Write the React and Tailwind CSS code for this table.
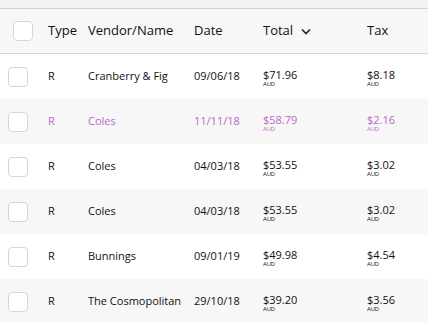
import React from "react";

const rows = [
  { type: "R", vendor: "Cranberry & Fig", date: "09/06/18", total: "$71.96", tax: "$8.18" },
  { type: "R", vendor: "Coles", date: "11/11/18", total: "$58.79", tax: "$2.16", active: true },
  { type: "R", vendor: "Coles", date: "04/03/18", total: "$53.55", tax: "$3.02" },
  { type: "R", vendor: "Coles", date: "04/03/18", total: "$53.55", tax: "$3.02" },
  { type: "R", vendor: "Bunnings", date: "09/01/19", total: "$49.98", tax: "$4.54" },
  { type: "R", vendor: "The Cosmopolitan", date: "29/10/18", total: "$39.20", tax: "$3.56" },
];

const cols = "grid grid-cols-[48px_40px_106px_69px_104px_1fr] items-center";

function Amount({ value }) {
  return (
    <div className="flex flex-col pt-[3px]">
      <span className="text-[11px] leading-[13px]">{value}</span>
      <span className="text-[6px] leading-[7px] tracking-tight">AUD</span>
    </div>
  );
}

function Box({ className = "" }) {
  return <div className={`h-[20px] w-[20px] rounded-[4px] border border-[#d6d6d6] bg-white ${className}`}></div>;
}

export default function App() {
  return (
    <div className="h-[322px] w-[428px] overflow-hidden bg-[#f7f7f7] font-['Open_Sans',sans-serif] text-[#111]">
      <div className="h-[9px] border-b border-[#d4d4d4] bg-[#f3f3f3]"></div>
      <div className={`${cols} h-[45px] border-b border-[#d4d4d4] bg-[#f7f7f7] text-[13px]`}>
        <Box className="ml-[13px]" />
        <span>Type</span>
        <span>Vendor/Name</span>
        <span>Date</span>
        <span className="flex items-center gap-[8px]">
          Total
          <svg width="10" height="7" viewBox="0 0 10 7" fill="none" stroke="#222" strokeWidth="1.6">
            <path d="M1 1.5 5 5.5 9 1.5" />
          </svg>
        </span>
        <span>Tax</span>
      </div>
      {rows.map((r, i) => (
        <div
          key={i}
          className={`${cols} h-[45px] text-[11px] ${i % 2 === 0 ? "bg-white" : "bg-[#f7f7f7]"} ${
            r.active ? "text-[#b868c8]" : "text-[#111]"
          }`}
        >
          <Box className="ml-[8px]" />
          <span>{r.type}</span>
          <span>{r.vendor}</span>
          <span>{r.date}</span>
          <Amount value={r.total} />
          <Amount value={r.tax} />
        </div>
      ))}
    </div>
  );
}
